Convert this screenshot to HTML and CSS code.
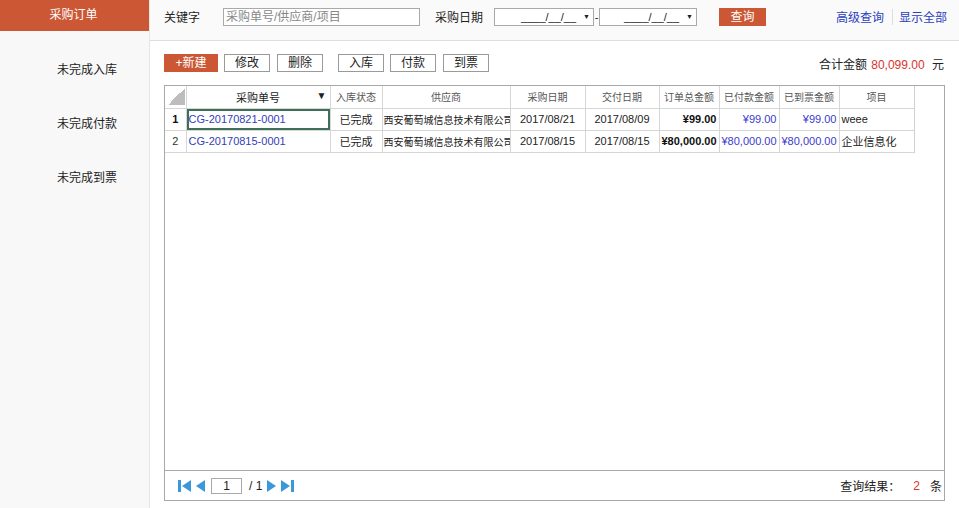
FILE: index.html
```
<!DOCTYPE html>
<html lang="zh">
<head>
<meta charset="utf-8">
<link rel="stylesheet" href="styles.css">
</head>
<body>
<div class="app">
  <aside class="side">
    <div class="side-head">采购订单</div>
    <div class="side-item">未完成入库</div>
    <div class="side-item">未完成付款</div>
    <div class="side-item">未完成到票</div>
  </aside>
  <main class="main">
    <div class="topbar">
      <span class="lbl">关键字</span>
      <div class="kw">采购单号/供应商/项目</div>
      <span class="lbl lbl2">采购日期</span>
      <div class="date"><span>____/__/__</span><i>▼</i></div>
      <span class="dash">-</span>
      <div class="date d2"><span>____/__/__</span><i>▼</i></div>
      <span class="btn-q">查询</span>
      <span class="spacer"></span>
      <a class="lnk">高级查询</a>
      <span class="sep"></span>
      <a class="lnk">显示全部</a>
    </div>
    <div class="toolbar">
      <span class="btn primary">+新建</span>
      <span class="btn">修改</span>
      <span class="btn g2">删除</span>
      <span class="btn g3">入库</span>
      <span class="btn">付款</span>
      <span class="btn g2">到票</span>
      <span class="spacer"></span>
      <span class="total">合计金额 <em>80,099.00</em> 元</span>
    </div>
    <div class="grid">
      <div class="grid-body">
        <table>
          <colgroup>
            <col style="width:21px"><col style="width:144px"><col style="width:52px"><col style="width:128px"><col style="width:75px"><col style="width:74px"><col style="width:60px"><col style="width:60px"><col style="width:60px"><col style="width:75px">
          </colgroup>
          <thead>
            <tr>
              <th class="corner"><div class="tri"></div></th>
              <th class="sort">采购单号<i>▼</i></th>
              <th>入库状态</th>
              <th>供应商</th>
              <th>采购日期</th>
              <th>交付日期</th>
              <th>订单总金额</th>
              <th>已付款金额</th>
              <th>已到票金额</th>
              <th>项目</th>
            </tr>
          </thead>
          <tbody>
            <tr>
              <td class="rn b">1</td>
              <td class="code sel">CG-20170821-0001</td>
              <td class="c">已完成</td>
              <td class="sup">西安葡萄城信息技术有限公司</td>
              <td class="c">2017/08/21</td>
              <td class="c">2017/08/09</td>
              <td class="r b">¥99.00</td>
              <td class="r blue">¥99.00</td>
              <td class="r blue">¥99.00</td>
              <td>weee</td>
            </tr>
            <tr>
              <td class="rn">2</td>
              <td class="code">CG-20170815-0001</td>
              <td class="c">已完成</td>
              <td class="sup">西安葡萄城信息技术有限公司</td>
              <td class="c">2017/08/15</td>
              <td class="c">2017/08/15</td>
              <td class="r b">¥80,000.00</td>
              <td class="r blue">¥80,000.00</td>
              <td class="r blue">¥80,000.00</td>
              <td>企业信息化</td>
            </tr>
          </tbody>
        </table>
        <div class="vline"></div>
      </div>
      <div class="pager">
        <svg class="pg" width="13" height="12" viewBox="0 0 13 12"><rect x="0" y="0" width="3" height="12" fill="#3a98d8"/><polygon points="13,0 13,12 4,6" fill="#3a98d8"/></svg>
        <svg class="pg p2" width="9" height="12" viewBox="0 0 9 12"><polygon points="9,0 9,12 0,6" fill="#3a98d8"/></svg>
        <div class="pnum">1</div>
        <span class="ptot">/ 1</span>
        <svg class="pg p3" width="9" height="12" viewBox="0 0 9 12"><polygon points="0,0 0,12 9,6" fill="#3a98d8"/></svg>
        <svg class="pg p2" width="13" height="12" viewBox="0 0 13 12"><polygon points="0,0 0,12 9,6" fill="#3a98d8"/><rect x="10" y="0" width="3" height="12" fill="#3a98d8"/></svg>
        <span class="spacer"></span>
        <span class="res">查询结果：</span><em class="cnt">2</em><span class="tiao">条</span>
      </div>
    </div>
  </main>
</div>
</body>
</html>
```
FILE: styles.css
```
* { box-sizing: border-box; }
html, body { margin: 0; padding: 0; }
body {
  width: 959px; height: 508px; overflow: hidden;
  font-family: "Liberation Sans", "Noto Sans CJK SC", sans-serif;
  font-size: 12px; color: #222; background: #fff;
}
.app { display: flex; height: 508px; }
.side {
  width: 150px; flex: none; background: #f8f8f8;
  border-right: 1px solid #e6e6e6;
}
.side-head {
  height: 31px; background: #cb5734; color: #fff;
  font-size: 12px; line-height: 31px; text-align: center;
  padding-right: 2px;
}
.side-item {
  line-height: 20px; padding-left: 57px; color: #222;
}
.side-head + .side-item { padding-top: 29px; height: 49px; }
.side-item + .side-item { padding-top: 34px; height: 54px; }
.main { flex: 1; display: flex; flex-direction: column; background: #fff; }
.topbar {
  height: 41px; border-bottom: 1px solid #dedede; background: #fafafa;
  display: flex; align-items: center; padding: 0 12px 7px 14px;
}
.lbl { margin-right: 23px; }
.lbl2 { margin-left: 15px; margin-right: 11px; }
.kw {
  width: 197px; height: 18px; border: 1px solid #a9a9a9; background: #fff;
  color: #888; line-height: 16px; padding-left: 2px; font-size: 12px;
}
.date {
  width: 100px; height: 18px; border: 1px solid #a9a9a9; background: #fff;
  display: flex; align-items: center; justify-content: flex-end;
  padding-right: 3px; font-size: 11px; color: #222;
}
.date.d2 { width: 98px; }
.date i { font-style: normal; font-size: 7px; margin-left: 7px; }
.dash { width: 5px; text-align: center; font-size: 11px; }
.btn-q {
  margin-left: 22px; width: 47px; height: 18px; background: #cb5734; color: #fff;
  text-align: center; line-height: 18px;
}
.spacer { flex: 1; }
.lnk { color: #2a3fbf; }
.sep { width: 1px; height: 16px; background: #ddd; margin: 0 6px 0 8px; }
.toolbar {
  display: flex; align-items: center; height: 18px; margin-top: 13px;
  padding-left: 14px; padding-right: 15px;
}
.btn {
  height: 18px; width: 46px; border: 1px solid #9a9a9a; background: #fff;
  text-align: center; line-height: 16px; margin-left: 6px; color: #222;
}
.btn.g2 { margin-left: 7px; }
.btn.g3 { margin-left: 15px; }
.btn.primary {
  width: 54px; margin-left: 0; background: #cb5734; border-color: #cb5734; color: #fff;
}
.total em { font-style: normal; color: #d9342b; margin: 0 4px 0 1px; }
.grid {
  margin: 13px 0 0 14px; width: 781px; height: 416px; border: 1px solid #a8a8a8;
  display: flex; flex-direction: column;
}
.grid-body { flex: 1; position: relative; }
.vline { position: absolute; left: 749px; top: 0; width: 1px; height: 67px; background: #d0d0d0; }
table { border-collapse: collapse; table-layout: fixed; width: 749px; }
th, td {
  height: 22px; border: 1px solid #d6d6d6; padding: 0 2px;
  white-space: nowrap; overflow: hidden; font-size: 11px;
}
tr:first-child th { border-top: none; }
th:first-child, td:first-child { border-left: none; }
th { font-weight: normal; color: #555; background: #fff; font-size: 10px; }
th.sort { position: relative; color: #222; font-size: 11px; }
th.sort i { position: absolute; right: 3px; top: 4px; font-style: normal; font-size: 10px; color: #222; }
th.corner { padding: 0; position: relative; }
.tri {
  position: absolute; left: 3px; top: 2px; width: 17px; height: 17px;
  background: linear-gradient(to bottom right, transparent 50%, #bdbdbd 50%);
}
td.rn { text-align: center; color: #333; }
td.b { font-weight: bold; color: #111; }
td.code { color: #3340b8; font-size: 11px; }
td.sel { box-shadow: inset 0 0 0 2px #3f6f58; }
td.c { text-align: center; }
td.r { text-align: right; }
td.blue { color: #3a3ad0; }
td.sup { font-size: 10px; padding-left: 1px; text-overflow: clip; }
.pager {
  height: 30px; border-top: 1px solid #a8a8a8; display: flex; align-items: center;
  padding-left: 13px; padding-right: 2px;
}
.pg { display: block; }
.p2 { margin-left: 5px; }
.p3 { margin-left: 5px; }
.pnum {
  width: 31px; height: 16px; border: 1px solid #a9a9a9; margin-left: 6px;
  text-align: center; line-height: 14px; font-size: 12px;
}
.ptot { margin-left: 7px; font-size: 12px; }
.cnt { font-style: normal; color: #d9342b; margin-left: 13px; margin-right: 10px; }
```
